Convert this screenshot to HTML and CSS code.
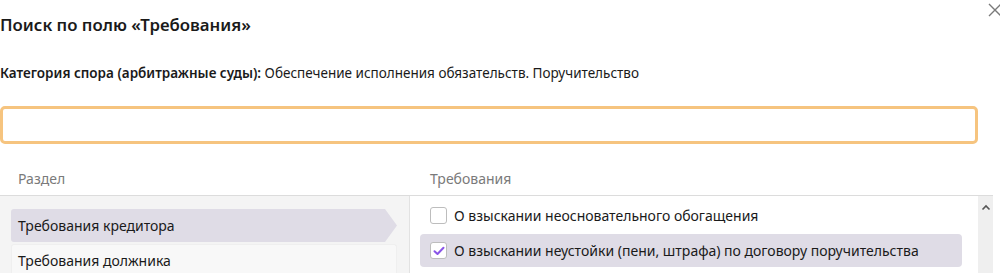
FILE: index.html
```html
<!DOCTYPE html>
<html lang="ru">
<head>
<meta charset="utf-8">
<link rel="stylesheet" href="styles.css">
</head>
<body>
<div class="dialog">
  <div class="head">
    <h1 class="title">Поиск по полю «Требования»</h1>
    <button class="close" aria-label="Закрыть">
      <svg width="14" height="14" viewBox="0 0 14 14"><path d="M1 1L13 13M13 1L1 13" stroke="#7a7a7a" stroke-width="1.4" fill="none"/></svg>
    </button>
  </div>
  <p class="category"><b>Категория спора (арбитражные суды):</b> Обеспечение исполнения обязательств. Поручительство</p>
  <div class="search"><input type="text" class="search-input"></div>
  <div class="table">
    <div class="cols-head">
      <div class="col-left">Раздел</div>
      <div class="col-right">Требования</div>
    </div>
    <div class="cols-body">
      <div class="sections">
        <div class="section active">Требования кредитора</div>
        <div class="section">Требования должника</div>
      </div>
      <div class="reqs">
        <div class="req-list">
          <label class="req"><span class="cb"></span>О взыскании неосновательного обогащения</label>
          <label class="req checked"><span class="cb"><svg width="12" height="10" viewBox="0 0 12 10"><path d="M1.5 5.2L4.5 8L10.5 1.8" stroke="#8a55e8" stroke-width="2" fill="none" stroke-linecap="round" stroke-linejoin="round"/></svg></span>О взыскании неустойки (пени, штрафа) по договору поручительства</label>
        </div>
        <div class="scrollbar">
          <svg width="10" height="7" viewBox="0 0 10 7"><path d="M1.5 5.5L5 2L8.5 5.5" stroke="#555" stroke-width="1.6" fill="none"/></svg>
        </div>
      </div>
    </div>
  </div>
</div>
</body>
</html>
```
FILE: styles.css
```css
html, body {
  margin: 0;
  padding: 0;
  background: #fff;
}
body {
  font-family: "Noto Sans", "Open Sans", sans-serif;
  color: #1a1a1a;
  width: 1000px;
  height: 273px;
  overflow: hidden;
}
.dialog {
  width: 1000px;
}
.head {
  display: flex;
  justify-content: space-between;
  align-items: flex-start;
  height: 56px;
}
.title {
  margin: 13px 0 0 0;
  font-size: 16.8px;
  font-weight: 600;
  line-height: 24px;
}
.close {
  border: 0;
  background: none;
  padding: 0;
  margin: 3px -3px 0 0;
  width: 15px;
  height: 15px;
  display: flex;
}
.category {
  margin: 0;
  font-size: 13.5px;
  line-height: 34px;
}
.category b {
  font-weight: 600;
}
.search {
  margin-top: 16px;
  width: 978px;
}
.search-input {
  box-sizing: border-box;
  width: 978px;
  height: 38px;
  border: 3px solid #f6c47f;
  border-radius: 5px;
  outline: none;
  display: block;
}
.table {
  margin-top: 18px;
  width: 993px;
}
.cols-head {
  display: grid;
  grid-template-columns: 411px 1fr;
  height: 33px;
  border-bottom: 1px solid #dcdcdc;
  color: #7a7a7a;
  font-size: 14px;
  align-items: center;
}
.col-left {
  padding-left: 18px;
}
.col-right {
  padding-left: 19px;
}
.cols-body {
  display: grid;
  grid-template-columns: 410px 1fr;
  height: 80px;
}
.sections {
  background: #f4f4f4;
  border-right: 1px solid #e2e2e2;
  padding: 13px 12px 0 11px;
  display: flex;
  flex-direction: column;
  gap: 2px;
}
.section {
  font-size: 14px;
  height: 33px;
  line-height: 33px;
  padding-left: 7px;
  box-sizing: border-box;
  border-radius: 3px;
}
.section.active {
  background: #dfdce6;
  clip-path: polygon(0 0, calc(100% - 12px) 0, 100% 50%, calc(100% - 12px) 100%, 0 100%);
}
.section:not(.active) {
  background: #f8f8f8;
  border: 1px solid #efefef;
  border-bottom: 0;
  padding-left: 6px;
  line-height: 31px;
}
.reqs {
  display: flex;
  background: #fff;
}
.req-list {
  flex: 1;
  padding: 4px 16px 0 10px;
  display: flex;
  flex-direction: column;
  gap: 4px;
}
.req {
  display: flex;
  align-items: center;
  height: 30px;
  font-size: 14px;
  padding-left: 10px;
  border-radius: 4px;
}
.req.checked {
  height: 33px;
  background: #dfdce6;
}
.cb {
  box-sizing: border-box;
  width: 17px;
  height: 17px;
  border: 1px solid #bdbdbd;
  border-radius: 3px;
  background: #fff;
  margin-right: 7px;
  display: flex;
  align-items: center;
  justify-content: center;
  flex: none;
}
.scrollbar {
  width: 15px;
  background: #efefef;
  display: flex;
  justify-content: center;
  align-items: flex-start;
  padding-top: 8px;
  box-sizing: border-box;
}
```
